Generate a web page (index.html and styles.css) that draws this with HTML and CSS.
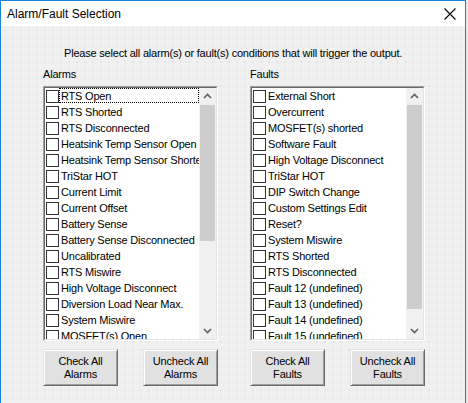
FILE: index.html
```html
<!DOCTYPE html>
<html lang="en">
<head>
    <meta charset="UTF-8">
    <title>Alarm/Fault Selection</title>
    <link rel="stylesheet" href="styles.css">
</head>
<body>
    <div class="window">
        <div class="titlebar">
            <span class="title">Alarm/Fault Selection</span>
            <svg class="close" width="12" height="12" viewBox="0 0 12 12">
                <path d="M0.5 0.5 L11.5 11.5 M11.5 0.5 L0.5 11.5" stroke="#000" stroke-width="1.1" fill="none"/>
            </svg>
        </div>
        <div class="client">
            <p class="prompt">Please select all alarm(s) or fault(s) conditions that will trigger the output.</p>
            <div class="columns">
                <div class="column">
                    <div class="label">Alarms</div>
                    <div class="listbox">
                        <div class="list-inner">
                            <ul class="items">
                                <li class="focused"><span class="box"></span><span class="text">RTS Open</span></li>
                                <li><span class="box"></span><span class="text">RTS Shorted</span></li>
                                <li><span class="box"></span><span class="text">RTS Disconnected</span></li>
                                <li><span class="box"></span><span class="text">Heatsink Temp Sensor Open</span></li>
                                <li><span class="box"></span><span class="text">Heatsink Temp Sensor Shorted</span></li>
                                <li><span class="box"></span><span class="text">TriStar HOT</span></li>
                                <li><span class="box"></span><span class="text">Current Limit</span></li>
                                <li><span class="box"></span><span class="text">Current Offset</span></li>
                                <li><span class="box"></span><span class="text">Battery Sense</span></li>
                                <li><span class="box"></span><span class="text">Battery Sense Disconnected</span></li>
                                <li><span class="box"></span><span class="text">Uncalibrated</span></li>
                                <li><span class="box"></span><span class="text">RTS Miswire</span></li>
                                <li><span class="box"></span><span class="text">High Voltage Disconnect</span></li>
                                <li><span class="box"></span><span class="text">Diversion Load Near Max.</span></li>
                                <li><span class="box"></span><span class="text">System Miswire</span></li>
                                <li><span class="box"></span><span class="text">MOSFET(s) Open</span></li>
                            </ul>
                            <div class="scrollbar">
                                <div class="arrow">
                                    <svg width="9" height="6" viewBox="0 0 9 6"><path d="M1 5 L4.5 1.5 L8 5" stroke="#606060" stroke-width="1.6" fill="none"/></svg>
                                </div>
                                <div class="track">
                                    <div class="thumb" style="height: 136px"></div>
                                </div>
                                <div class="arrow">
                                    <svg width="9" height="6" viewBox="0 0 9 6"><path d="M1 1 L4.5 4.5 L8 1" stroke="#606060" stroke-width="1.6" fill="none"/></svg>
                                </div>
                            </div>
                        </div>
                    </div>
                    <div class="buttons">
                        <button class="btn">Check All<br>Alarms</button>
                        <button class="btn">Uncheck All<br>Alarms</button>
                    </div>
                </div>
                <div class="column">
                    <div class="label">Faults</div>
                    <div class="listbox">
                        <div class="list-inner">
                            <ul class="items">
                                <li><span class="box"></span><span class="text">External Short</span></li>
                                <li><span class="box"></span><span class="text">Overcurrent</span></li>
                                <li><span class="box"></span><span class="text">MOSFET(s) shorted</span></li>
                                <li><span class="box"></span><span class="text">Software Fault</span></li>
                                <li><span class="box"></span><span class="text">High Voltage Disconnect</span></li>
                                <li><span class="box"></span><span class="text">TriStar HOT</span></li>
                                <li><span class="box"></span><span class="text">DIP Switch Change</span></li>
                                <li><span class="box"></span><span class="text">Custom Settings Edit</span></li>
                                <li><span class="box"></span><span class="text">Reset?</span></li>
                                <li><span class="box"></span><span class="text">System Miswire</span></li>
                                <li><span class="box"></span><span class="text">RTS Shorted</span></li>
                                <li><span class="box"></span><span class="text">RTS Disconnected</span></li>
                                <li><span class="box"></span><span class="text">Fault 12 (undefined)</span></li>
                                <li><span class="box"></span><span class="text">Fault 13 (undefined)</span></li>
                                <li><span class="box"></span><span class="text">Fault 14 (undefined)</span></li>
                                <li><span class="box"></span><span class="text">Fault 15 (undefined)</span></li>
                            </ul>
                            <div class="scrollbar">
                                <div class="arrow">
                                    <svg width="9" height="6" viewBox="0 0 9 6"><path d="M1 5 L4.5 1.5 L8 5" stroke="#606060" stroke-width="1.6" fill="none"/></svg>
                                </div>
                                <div class="track">
                                    <div class="thumb" style="height: 204px"></div>
                                </div>
                                <div class="arrow">
                                    <svg width="9" height="6" viewBox="0 0 9 6"><path d="M1 1 L4.5 4.5 L8 1" stroke="#606060" stroke-width="1.6" fill="none"/></svg>
                                </div>
                            </div>
                        </div>
                    </div>
                    <div class="buttons">
                        <button class="btn">Check All<br>Faults</button>
                        <button class="btn">Uncheck All<br>Faults</button>
                    </div>
                </div>
            </div>
        </div>
    </div>
</body>
</html>
```

FILE: styles.css
```css
html {
    background-color: #e9e9e9;
}
body {
    margin: 0;
    padding: 0;
    font-family: "Liberation Sans", Arial, sans-serif;
    font-size: 11px;
    letter-spacing: -0.2px;
    color: #000;
}
.window {
    width: 464px;
    height: 402px;
    border: 1px solid #1883d7;
    border-bottom: none;
    background-color: #f0f0f0;
    display: flex;
    flex-direction: column;
    overflow: hidden;
}
.titlebar {
    height: 25px;
    background-color: #fff;
    display: flex;
    align-items: center;
    justify-content: space-between;
    padding: 0 9px 0 6px;
    flex-shrink: 0;
}
.title {
    font-size: 12px;
    letter-spacing: 0;
    color: #000;
    padding-top: 1px;
}
.close {
    display: block;
    margin-top: 1px;
}
.client {
    flex: 1;
    padding: 21px 0 0 42px;
    background-color: #f0f0f0;
    background-image: radial-gradient(circle at 1px 1px, #dedede 0.6px, transparent 0.9px);
    background-size: 8px 8px;
    background-position: 3px 3px;
}
.prompt {
    margin: 0 0 8px 21px;
    line-height: 13px;
    white-space: nowrap;
}
.columns {
    display: flex;
    gap: 32px;
}
.column {
    width: 175px;
}
.label {
    line-height: 13px;
    margin-bottom: 5px;
}
.listbox {
    height: 255px;
    border: 1px solid;
    border-color: #a0a0a0 #fff #fff #a0a0a0;
    box-sizing: border-box;
}
.list-inner {
    height: 100%;
    border: 1px solid;
    border-color: #696969 #e3e3e3 #e3e3e3 #696969;
    box-sizing: border-box;
    background-color: #fff;
    display: flex;
    overflow: hidden;
}
.items {
    flex: 1;
    list-style: none;
    margin: 0;
    padding: 0;
    overflow: hidden;
    min-width: 0;
}
.items li {
    height: 16px;
    display: flex;
    align-items: center;
    white-space: nowrap;
    position: relative;
}
.box {
    width: 11px;
    height: 11px;
    border: 1px solid #333;
    background-color: #fff;
    margin: 0 1px 0 1px;
    flex-shrink: 0;
}
.text {
    line-height: 16px;
    padding-left: 1px;
}
.focused::after {
    content: "";
    position: absolute;
    left: 14px;
    right: 0;
    top: 0;
    bottom: 1px;
    border: 1px dotted #000;
}
.scrollbar {
    width: 17px;
    flex-shrink: 0;
    background-color: #f0f0f0;
    display: flex;
    flex-direction: column;
}
.arrow {
    height: 16px;
    display: flex;
    align-items: center;
    justify-content: center;
    flex-shrink: 0;
}
.track {
    flex: 1;
    padding: 1px 1px 0 1px;
}
.thumb {
    background-color: #cdcdcd;
}
.buttons {
    display: flex;
    justify-content: space-between;
    margin-top: 8px;
}
.btn {
    width: 75px;
    height: 37px;
    padding: 0;
    font-family: "Liberation Sans", Arial, sans-serif;
    font-size: 11px;
    letter-spacing: -0.2px;
    line-height: 13px;
    color: #000;
    background-color: #e1e1e1;
    border: 1px solid;
    border-color: #e3e3e3 #696969 #696969 #e3e3e3;
    box-shadow: inset 1px 1px #fff, inset -1px -1px #a0a0a0;
}
```
